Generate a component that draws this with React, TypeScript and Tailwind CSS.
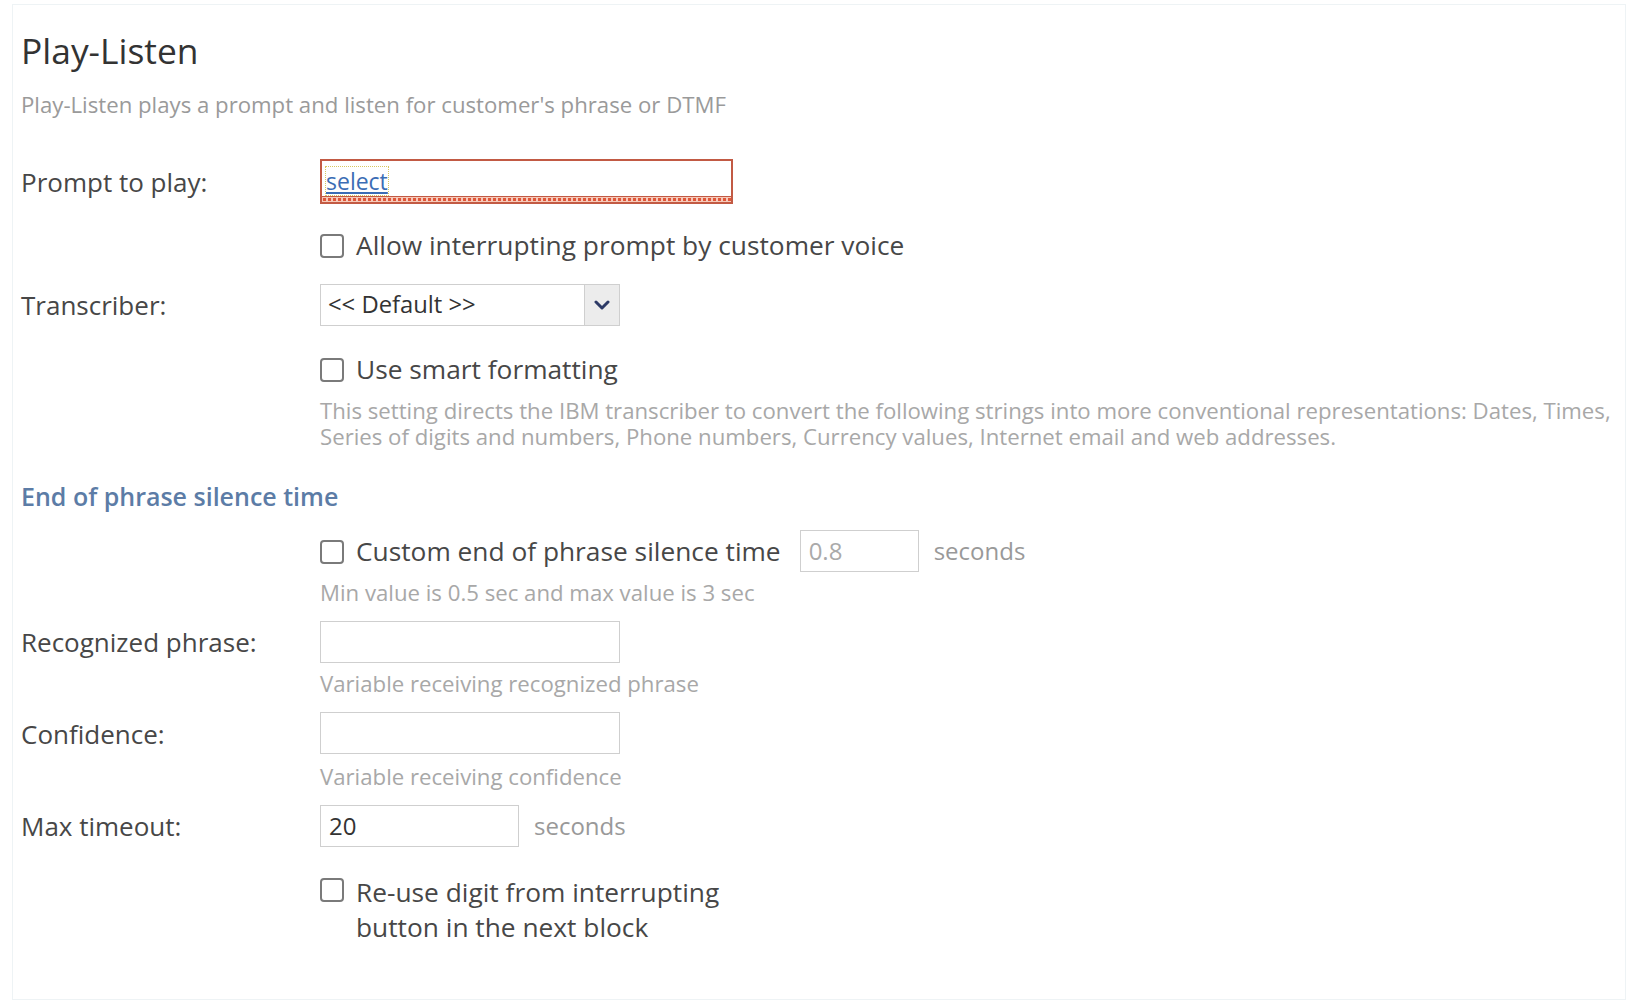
import { ReactNode } from "react";

function Checkbox() {
  return (
    <span className="mt-[1px] block h-[24px] w-[24px] shrink-0 rounded-[4px] border-2 border-[#7a7a7a] bg-white" />
  );
}

function Row({ label, children, className }: { label?: string; children: ReactNode; className?: string }) {
  return (
    <div className={`flex items-center ${className ?? ""}`}>
      <div className="w-[299px] shrink-0 text-[26px] leading-[36px] text-[#474747]">{label}</div>
      {children}
    </div>
  );
}

function Help({ children, className }: { children: ReactNode; className?: string }) {
  return (
    <div className={`pl-[299px] text-[22.2px] leading-[26px] text-[#a8a8a8] ${className ?? ""}`}>{children}</div>
  );
}

function TextInput({ value, width, muted }: { value?: string; width: string; muted?: boolean }) {
  return (
    <div
      className={`flex h-[42px] items-center border border-[#cfcfcf] bg-white px-[8px] text-[24px] ${width} ${
        muted ? "text-[#aaa]" : "text-[#333]"
      }`}
    >
      {value}
    </div>
  );
}

export default function App() {
  return (
    <div className="min-h-[1004px] w-[1630px] bg-white p-[4px] pl-[12px] pb-[4px]" style={{ fontFamily: '"Open Sans", sans-serif' }}>
      <div className="flex min-h-[996px] flex-col border border-[#eef3f5] pl-[8px] pt-[21px]">
        <h1 className="text-[35.4px] leading-[48px] text-[#333]">Play-Listen</h1>
        <p className="mt-[17px] text-[22.2px] leading-[28px] text-[#9a9a9a]">
          Play-Listen plays a prompt and listen for customer's phrase or DTMF
        </p>

        <Row label="Prompt to play:" className="mt-[40px]">
          <div className="relative h-[45px] w-[413px] border-2 border-[#c25a44] bg-white">
            <span className="absolute left-[4px] top-[6px] text-[23px] leading-[28px] text-[#3b6db5] underline outline-1 outline-dotted outline-[#d8c860]">
              select
            </span>
            <span className="absolute bottom-0 left-0 right-0 h-[6px] border-t border-[#c25a44] bg-[#f6c9b8] bg-[radial-gradient(circle,#e0573a_1.5px,transparent_1.8px)] bg-[length:5px_5px]" />
          </div>
        </Row>

        <Row className="mt-[23px]">
          <label className="flex items-center gap-[12px] text-[26.3px] leading-[36px] text-[#474747]">
            <Checkbox />
            Allow interrupting prompt by customer voice
          </label>
        </Row>

        <Row label="Transcriber:" className="mt-[21px]">
          <div className="flex h-[42px] w-[300px] items-stretch border border-[#cfcfcf] bg-white">
            <div className="flex flex-1 items-center px-[7px] text-[23.8px] text-[#333]">&lt;&lt; Default &gt;&gt;</div>
            <div className="flex w-[35px] items-center justify-center border-l border-[#cfcfcf] bg-[#ececec]">
              <svg width="16" height="10" viewBox="0 0 16 10">
                <path d="M2 2 L8 8 L14 2" fill="none" stroke="#2d3a66" strokeWidth="3" strokeLinecap="round" strokeLinejoin="round" />
              </svg>
            </div>
          </div>
        </Row>

        <Row className="mt-[25px]">
          <label className="flex items-center gap-[12px] text-[26.3px] leading-[36px] text-[#474747]">
            <Checkbox />
            Use smart formatting
          </label>
        </Row>
        <Help className="mt-[11px]">
          This setting directs the IBM transcriber to convert the following strings into more conventional representations: Dates, Times,
          <br />
          Series of digits and numbers, Phone numbers, Currency values, Internet email and web addresses.
        </Help>

        <h2 className="mt-[30px] text-[25px] font-semibold leading-[32px] text-[#5c7ca6]">End of phrase silence time</h2>

        <Row className="mt-[18px]">
          <label className="flex items-center gap-[12px] text-[26.3px] leading-[36px] text-[#474747]">
            <Checkbox />
            Custom end of phrase silence time
          </label>
          <div className="ml-[19px]">
            <TextInput value="0.8" width="w-[119px]" muted />
          </div>
          <span className="ml-[15px] text-[24px] text-[#999]">seconds</span>
        </Row>
        <Help className="mt-[8px]">Min value is 0.5 sec and max value is 3 sec</Help>

        <Row label="Recognized phrase:" className="mt-[15px]">
          <TextInput width="w-[300px]" />
        </Row>
        <Help className="mt-[8px]">Variable receiving recognized phrase</Help>

        <Row label="Confidence:" className="mt-[15px]">
          <div className="h-[43px]">
            <TextInput width="w-[300px]" />
          </div>
        </Row>
        <Help className="mt-[9px]">Variable receiving confidence</Help>

        <Row label="Max timeout:" className="mt-[15px]">
          <TextInput value="20" width="w-[199px]" />
          <span className="ml-[15px] text-[24px] text-[#999]">seconds</span>
        </Row>

        <div className="mt-[28px] flex items-start pl-[299px]">
          <label className="flex w-[420px] items-start gap-[12px] text-[26.3px] leading-[35px] text-[#474747]">
            <span className="mt-[2px]">
              <Checkbox />
            </span>
            <span className="w-[385px]">Re-use digit from interrupting button in the next block</span>
          </label>
        </div>
      </div>
    </div>
  );
}
